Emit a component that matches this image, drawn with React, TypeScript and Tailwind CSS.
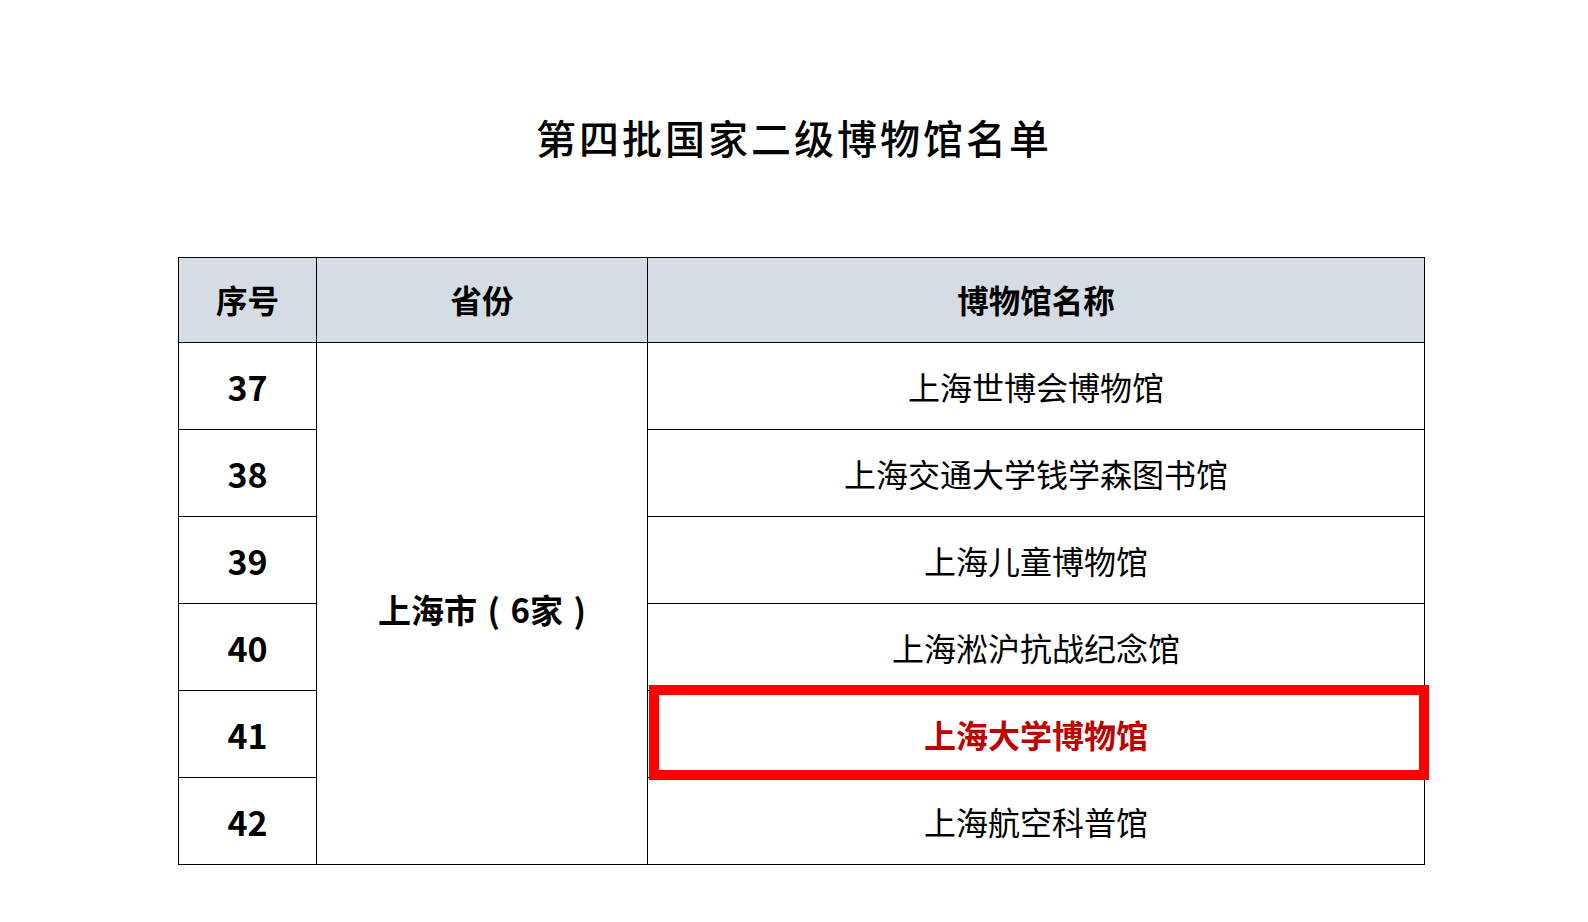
import React from 'react'

const museums = [
    { no: 37, name: '上海世博会博物馆' },
    { no: 38, name: '上海交通大学钱学森图书馆' },
    { no: 39, name: '上海儿童博物馆' },
    { no: 40, name: '上海淞沪抗战纪念馆' },
    { no: 41, name: '上海大学博物馆', highlight: true },
    { no: 42, name: '上海航空科普馆' },
]

export default function App() {
    return (
        <div
            className="w-[1588px] h-[922px] bg-white text-black overflow-hidden"
            style={{ fontFamily: '"Noto Sans CJK SC", "Noto Sans", sans-serif' }}
        >
            {/* Title */}
            <h1 className="pt-[117px] text-center text-[40px] leading-[40px] tracking-[3px] font-medium">
                第四批国家二级博物馆名单
            </h1>

            {/* Table */}
            <table className="mt-[100px] ml-[178px] w-[1246px] table-fixed border-collapse border border-black">
                <colgroup>
                    <col className="w-[138px]" />
                    <col className="w-[331px]" />
                    <col className="w-[777px]" />
                </colgroup>
                <thead>
                    <tr className="h-[85px] bg-[#d6dce4]">
                        <th className="border border-black text-[31.5px] font-bold">序号</th>
                        <th className="border border-black text-[31.5px] font-bold">省份</th>
                        <th className="border border-black text-[31.5px] font-bold">博物馆名称</th>
                    </tr>
                </thead>
                <tbody>
                    {museums.map((m, i) => (
                        <tr key={m.no} className="h-[87px]">
                            <td className="border border-black text-center text-[34px] font-bold">{m.no}</td>
                            {i === 0 && (
                                <td
                                    rowSpan={museums.length}
                                    className="border border-black pt-[12px] text-center text-[33px] font-bold whitespace-pre [word-spacing:3px]"
                                >
                                    {'上海市 ( 6家 )'}
                                </td>
                            )}
                            <td className="relative border border-black text-center text-[32px]">
                                {m.highlight ? (
                                    <>
                                        <span className="font-bold text-[#c00000]">{m.name}</span>
                                        <div className="absolute top-[-6px] left-[1px] right-[-5px] bottom-[-3px] border-[10px] border-[#ff0000]" />
                                    </>
                                ) : (
                                    m.name
                                )}
                            </td>
                        </tr>
                    ))}
                </tbody>
            </table>
        </div>
    )
}
